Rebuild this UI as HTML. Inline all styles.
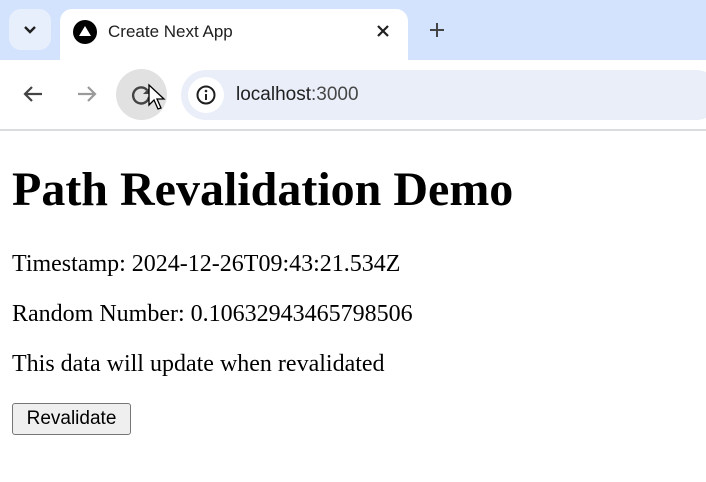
<!DOCTYPE html>
<html><head><style>
html,body{margin:0;padding:0;width:706px;height:482px;overflow:hidden;background:#fff;font-family:"Liberation Serif",serif;}
.top{position:absolute;left:0;top:0;width:706px;height:60px;background:#d3e3fd;}
.tabbtn{position:absolute;left:9px;top:9px;width:42px;height:41px;border-radius:12px;background:#e8effc;}
.tab{position:absolute;left:60px;top:9px;width:348px;height:52px;background:#fff;border-radius:12px 12px 0 0;}
.tool{position:absolute;left:0;top:60px;width:706px;height:69px;background:#fff;}
.line{position:absolute;left:0;top:129px;width:706px;height:2px;background:#dadce0;}
.url{position:absolute;left:181px;top:70px;width:540px;height:50px;border-radius:25px;background:#e9eef8;}
.info{position:absolute;left:188px;top:77px;width:36px;height:36px;border-radius:18px;background:#fff;}
.reload{position:absolute;left:116px;top:69px;width:51px;height:51px;border-radius:26px;background:#e1e1e1;}
.t{position:absolute;font-family:"Liberation Sans",sans-serif;white-space:nowrap;}
.p{position:absolute;left:12px;font-size:24px;white-space:nowrap;line-height:1;}
</style></head><body>
<div class="top"></div>
<div class="tabbtn"></div>
<svg style="position:absolute;left:22px;top:23px" width="16" height="14"><path d="M3 4l5 5 5-5" stroke="#1f1f1f" stroke-width="2.4" fill="none"/></svg>
<div class="tab"></div>
<svg style="position:absolute;left:72px;top:19px" width="26" height="26"><circle cx="13" cy="13" r="12" fill="#000"/><path d="M13 7l6 10H7z" fill="#fff"/></svg>
<div class="t" style="left:108px;top:22px;font-size:17px;color:#1f1f1f;">Create Next App</div>
<svg style="position:absolute;left:376px;top:24px" width="14" height="14"><path d="M2 2l10 10M12 2L2 12" stroke="#1f1f1f" stroke-width="2.2"/></svg>
<svg style="position:absolute;left:429px;top:22px" width="16" height="16"><path d="M8 1v14M1 8h14" stroke="#444" stroke-width="2"/></svg>
<div class="tool"></div>
<svg style="position:absolute;left:22px;top:84px" width="22" height="20"><path d="M20 10H3M10 3L3 10l7 7" stroke="#444" stroke-width="2.2" fill="none"/></svg>
<svg style="position:absolute;left:76px;top:84px" width="22" height="20"><path d="M2 10h17M12 3l7 7-7 7" stroke="#9a9a9a" stroke-width="2.2" fill="none"/></svg>
<div class="reload"></div>
<svg style="position:absolute;left:130px;top:84px" width="24" height="22"><path d="M17 6A8 8 0 1 0 19 13" stroke="#444" stroke-width="2.4" fill="none"/><path d="M20 3v7h-7z" fill="#444"/></svg>
<svg style="position:absolute;left:147px;top:83px" width="22" height="30"><path d="M2 2v20l5-5 4 9 3-1-4-9h7z" fill="#fff" stroke="#000" stroke-width="1.3"/></svg>
<div class="url"></div>
<div class="info"></div>
<svg style="position:absolute;left:195px;top:84px" width="22" height="22"><circle cx="11" cy="11" r="8.5" stroke="#1f1f1f" stroke-width="2" fill="none"/><path d="M11 10v6" stroke="#1f1f1f" stroke-width="2"/><circle cx="11" cy="7" r="1.3" fill="#1f1f1f"/></svg>
<div class="t" style="left:236px;top:84px;font-size:19px;color:#1f1f1f;">localhost<span style="color:#474747">:3000</span></div>
<div class="line"></div>
<div style="position:absolute;left:12px;top:166px;font-size:48px;font-weight:bold;line-height:1;white-space:nowrap;">Path Revalidation Demo</div>
<div class="p" style="top:252px">Timestamp: 2024-12-26T09:43:21.534Z</div>
<div class="p" style="top:302px">Random Number: 0.10632943465798506</div>
<div class="p" style="top:352px">This data will update when revalidated</div>
<div style="position:absolute;left:12px;top:403px;width:117px;height:30px;border:1px solid #767676;border-radius:3px;background:#efefef;font-family:'Liberation Sans',sans-serif;font-size:19px;line-height:30px;text-align:center;">Revalidate</div>
</body></html>
